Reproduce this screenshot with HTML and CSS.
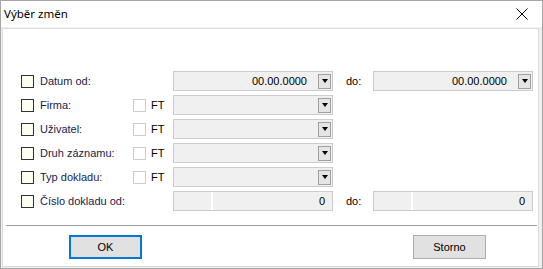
FILE: index.html
```html
<!DOCTYPE html>
<html lang="cs">
<head>
<meta charset="utf-8">
<title>Výběr změn</title>
<link rel="stylesheet" href="styles.css">
</head>
<body>
<div class="window">
  <div class="titlebar">
    <span class="title">Výběr změn</span>
    <svg class="close" width="12" height="12" viewBox="0 0 12 12"><path d="M0.5 0.5L11.5 11.5M11.5 0.5L0.5 11.5" stroke="#000" stroke-width="1" fill="none"/></svg>
  </div>
  <div class="frame">
    <div class="panel">
      <div class="form">
        <div class="row">
          <span class="chk"></span><span class="label">Datum od:</span>
          <span class="ftcell"></span>
          <div class="combo"><span class="val">00.00.0000</span><span class="drop"></span></div>
          <span class="dolabel">do:</span>
          <div class="combo"><span class="val">00.00.0000</span><span class="drop"></span></div>
        </div>
        <div class="row">
          <span class="chk"></span><span class="label">Firma:</span>
          <span class="ftcell"><span class="ftchk"></span><span class="ft">FT</span></span>
          <div class="combo"><span class="val"></span><span class="drop"></span></div>
        </div>
        <div class="row">
          <span class="chk"></span><span class="label">Uživatel:</span>
          <span class="ftcell"><span class="ftchk"></span><span class="ft">FT</span></span>
          <div class="combo"><span class="val"></span><span class="drop"></span></div>
        </div>
        <div class="row">
          <span class="chk"></span><span class="label">Druh záznamu:</span>
          <span class="ftcell"><span class="ftchk"></span><span class="ft">FT</span></span>
          <div class="combo"><span class="val"></span><span class="drop"></span></div>
        </div>
        <div class="row">
          <span class="chk"></span><span class="label">Typ dokladu:</span>
          <span class="ftcell"><span class="ftchk"></span><span class="ft">FT</span></span>
          <div class="combo"><span class="val"></span><span class="drop"></span></div>
        </div>
        <div class="row">
          <span class="chk"></span><span class="label">Číslo dokladu od:</span>
          <span class="ftcell"></span>
          <div class="num"><span class="seg"></span><span class="numval">0</span></div>
          <span class="dolabel">do:</span>
          <div class="num"><span class="seg"></span><span class="numval">0</span></div>
        </div>
      </div>
      <div class="sep"></div>
      <div class="buttons">
        <button class="btn btn-ok">OK</button>
        <button class="btn btn-cancel">Storno</button>
      </div>
    </div>
  </div>
</div>
</body>
</html>
```
FILE: styles.css
```css
* { box-sizing: border-box; }
html, body { margin: 0; padding: 0; }
body {
  width: 543px;
  height: 269px;
  overflow: hidden;
  font-family: "Liberation Sans", Arial, sans-serif;
  font-size: 11px;
  color: #000;
}
.window {
  width: 543px;
  height: 269px;
  border: 1px solid #a6a6a6;
  display: flex;
  flex-direction: column;
  background: #f0f0f0;
}
.titlebar {
  height: 26px;
  background: #fff;
  display: flex;
  align-items: center;
  justify-content: space-between;
  padding: 0 14px 0 3px;
  flex: none;
}
.title {
  font-family: "Noto Sans", "Open Sans", sans-serif;
  font-size: 11.5px;
  color: #000;
  position: relative;
  top: -1px;
}
.close { display: block; }
.frame {
  flex: 1;
  padding: 1px 3px 1px 1px;
  display: flex;
}
.panel {
  flex: 1;
  background: #fff;
  border: 1px solid #dcdcdc;
  display: flex;
  flex-direction: column;
}
.form {
  padding: 42px 0 0 18px;
  display: flex;
  flex-direction: column;
  gap: 4px;
}
.row {
  height: 20px;
  display: flex;
  align-items: center;
}
.chk {
  width: 13px;
  height: 13px;
  border: 1px solid #333;
  background: #fefef0;
  margin-right: 6px;
  flex: none;
}
.label {
  width: 93px;
  color: #1b1b4b;
  flex: none;
}
.ftcell {
  width: 40px;
  display: flex;
  align-items: center;
  flex: none;
}
.ftchk {
  width: 13px;
  height: 13px;
  border: 1px solid #cccccc;
  background: #fff;
  margin-right: 5px;
}
.ft { color: #000; }
.combo, .num {
  width: 160px;
  height: 20px;
  border: 1px solid #cccccc;
  background: #f0f0f0;
  display: flex;
  align-items: center;
  flex: none;
}
.combo { padding-right: 1px; }
.val {
  flex: 1;
  text-align: right;
  padding-right: 11px;
}
.drop {
  width: 13px;
  height: 15px;
  border: 1px solid #a0a0a0;
  background: #e5e5e5;
  display: flex;
  align-items: center;
  justify-content: center;
}
.drop::after {
  content: "";
  width: 0;
  height: 0;
  border-left: 3.5px solid transparent;
  border-right: 3.5px solid transparent;
  border-top: 4px solid #000;
}
.dolabel {
  width: 40px;
  padding-left: 13px;
  flex: none;
}
.num { align-items: stretch; }
.seg {
  width: 39px;
  border-right: 2px solid #ffffff;
}
.numval {
  flex: 1;
  text-align: right;
  padding-right: 7px;
  display: flex;
  align-items: center;
  justify-content: flex-end;
}
.sep {
  height: 1px;
  background: #a0a0a0;
  margin: 14px 1px 0 3px;
}
.buttons {
  display: flex;
  padding: 9px 0 0 66px;
}
.btn {
  width: 73px;
  height: 24px;
  background: #e1e1e1;
  border: 1px solid #adadad;
  font-family: "Liberation Sans", Arial, sans-serif;
  font-size: 11px;
  color: #000;
  padding: 0;
}
.btn-ok {
  border: 2px solid #0078d7;
}
.btn-cancel {
  margin-left: 271px;
}
```
